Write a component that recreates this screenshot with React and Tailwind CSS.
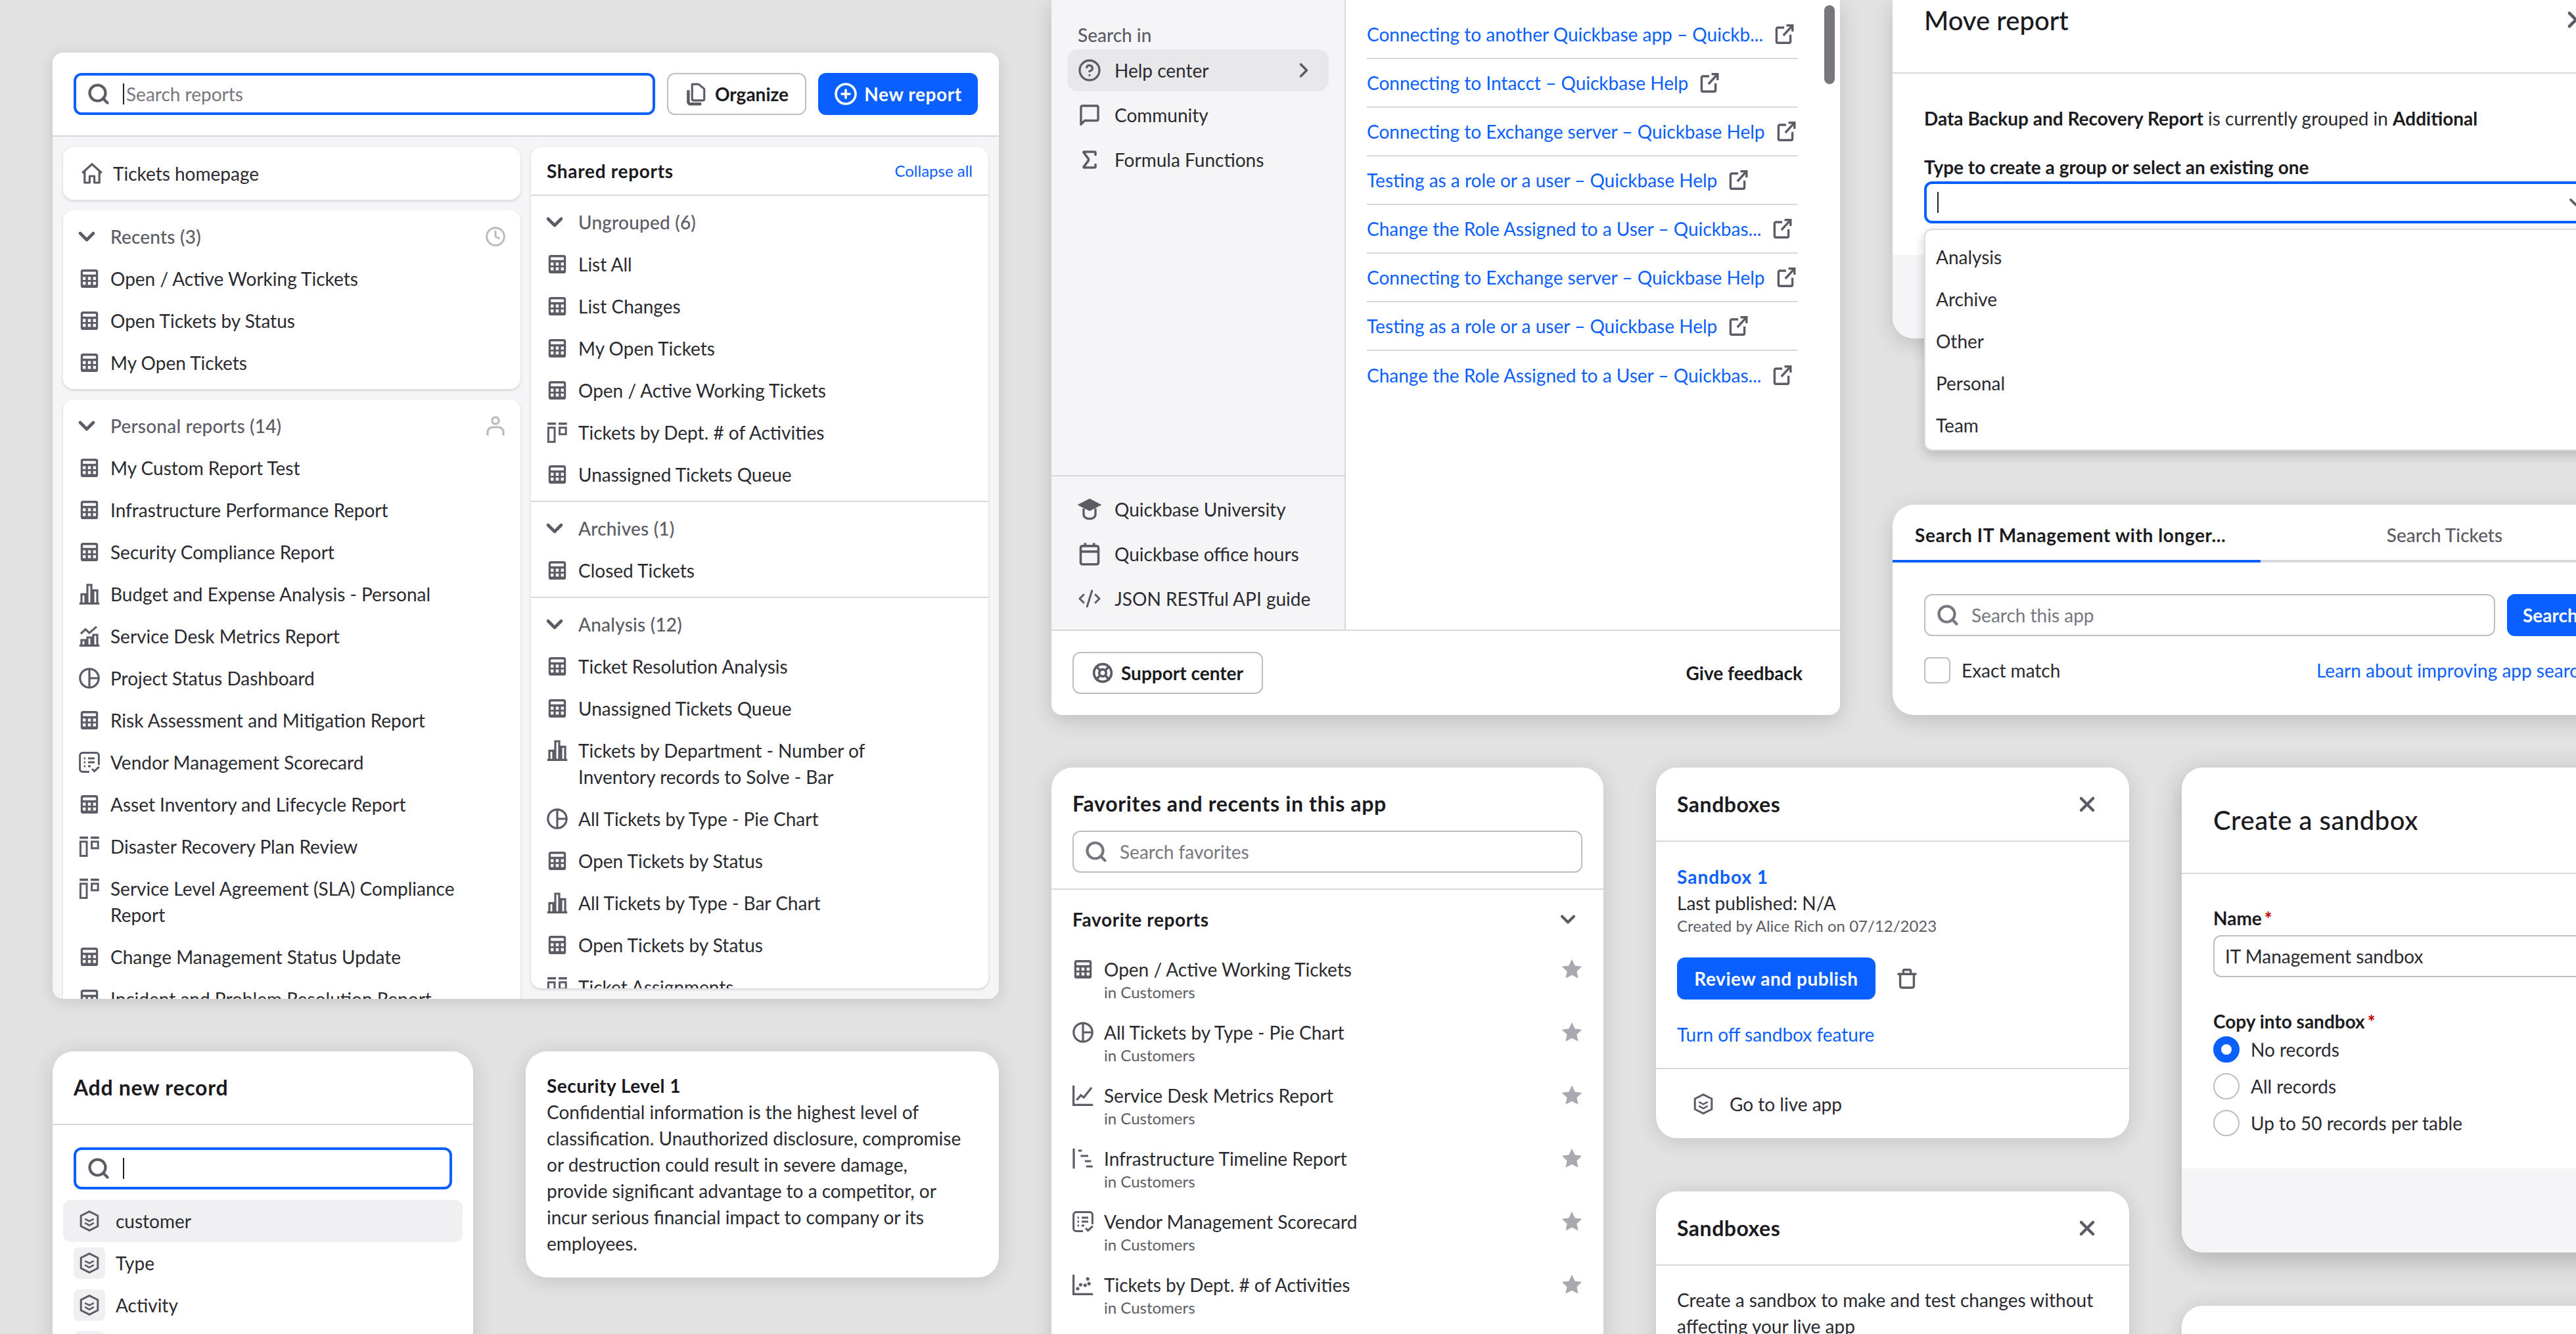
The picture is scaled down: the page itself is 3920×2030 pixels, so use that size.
import React from 'react';
import { Search, ChevronDown, ChevronRight, X, LifeBuoy, CodeXml, Sigma, CircleHelp, CirclePlus, Clock } from 'lucide-react';

const GRAY = '#5c5c66';

// Report type icons, all drawn on a 16 unit box
const TableIcon = ({ className = 'w-8 h-8' }) => (
    <svg viewBox="0 0 16 16" className={`${className} shrink-0`}>
        <rect x="1.4" y="1" width="13.2" height="14" rx="1.8" fill={GRAY} />
        <rect x="3" y="2.7" width="10" height="2.2" rx="0.4" fill="#fff" />
        {[3, 6.9, 10.8].map(x => [6.7, 10.4].map(y => (
            <rect key={`${x}-${y}`} x={x} y={y} width="2.2" height="2.3" fill="#fff" />
        )))}
    </svg>
);

const BarsIcon = () => (
    <svg viewBox="0 0 16 16" className="w-8 h-8 shrink-0" fill="none" stroke={GRAY} strokeWidth="1.6">
        <path d="M.4 15.2h15.2" strokeWidth="1.7" />
        <path d="M2 15V8.2h3V15M6.5 15V1h3v14M11 15V5.2h3V15" />
    </svg>
);

const BarsLineIcon = () => (
    <svg viewBox="0 0 16 16" className="w-8 h-8 shrink-0" fill="none" stroke={GRAY} strokeWidth="1.6">
        <path d="M.4 15.2h15.2" strokeWidth="1.7" />
        <path d="M2 15v-4h3v4M6.5 15V9h3v6M11 15V7h3v8" />
        <path d="M1.5 6.2 5 2.8l3 2.8L13.5.8" />
    </svg>
);

const PieIcon = () => (
    <svg viewBox="0 0 16 16" className="w-8 h-8 shrink-0" fill="none" stroke={GRAY} strokeWidth="1.6">
        <circle cx="8" cy="8" r="7.1" />
        <path d="M8 1v14M8 8h7" />
    </svg>
);

const ScoreIcon = () => (
    <svg viewBox="0 0 16 16" className="w-8 h-8 shrink-0" fill="none" stroke={GRAY} strokeWidth="1.5">
        <path d="M8 15.2H2.8a2 2 0 0 1-2-2V2.8a2 2 0 0 1 2-2h10.4a2 2 0 0 1 2 2V10" />
        <path d="M3.8 5h1.2M7 5h5M3.8 8h1.2M7 8h5M3.8 11h1.2M7 11h2" />
        <path d="m10 13 1.8 1.8 3.6-3.4" />
    </svg>
);

const BoardIcon = () => (
    <svg viewBox="0 0 16 16" className="w-8 h-8 shrink-0" fill="none" stroke={GRAY} strokeWidth="1.5">
        <path d="M.6 1.4h6.4M9 1.4h6.4" strokeWidth="1.8" />
        <rect x="1.2" y="4.4" width="4.8" height="10.8" />
        <rect x="9.8" y="4.4" width="4.8" height="5" />
    </svg>
);

const LineIcon = () => (
    <svg viewBox="0 0 16 16" className="w-8 h-8 shrink-0" fill="none" stroke={GRAY} strokeWidth="1.6">
        <path d="M.8.4v14.8h14.8" />
        <path d="m3.2 11.5 3.2-3.7 2.2 1.7L14.6 2" />
    </svg>
);

const TimelineIcon = () => (
    <svg viewBox="0 0 16 16" className="w-8 h-8 shrink-0" fill="none" stroke={GRAY} strokeWidth="1.6">
        <path d="M1 .4v15.2M4.4 2h2.8M6.2 6h5.8M9.4 10h4.8M10.4 14h5" />
    </svg>
);

const ScatterIcon = () => (
    <svg viewBox="0 0 16 16" className="w-8 h-8 shrink-0" stroke={GRAY} fill={GRAY}>
        <path d="M.8.4v14.8h14.8" fill="none" strokeWidth="1.6" />
        <circle cx="4" cy="11" r=".8" /><circle cx="6.2" cy="8" r=".8" /><circle cx="9.6" cy="8.4" r=".8" />
        <circle cx="11.6" cy="3.6" r=".8" /><circle cx="12.6" cy="7.2" r=".8" />
    </svg>
);

const HexIcon = ({ className = 'w-8 h-8' }) => (
    <svg viewBox="0 0 16 16" className={`${className} shrink-0`} fill="none" stroke={GRAY} strokeWidth="1.5">
        <path d="M8 .8 14.4 4v8L8 15.2 1.6 12V4z" strokeLinejoin="round" />
        <path d="M4.6 6.4 8 8.2l3.4-1.8M4.6 9.4 8 11.4l3.4-2" strokeWidth="1.3" />
    </svg>
);

const HomeIcon = () => (
    <svg viewBox="0 0 16 16" className="w-8 h-8 shrink-0" fill="none" stroke={GRAY} strokeWidth="1.6">
        <path d="M.6 7.6 8 .9l7.4 6.7M2.4 6.2v8.8h3.8v-5h3.6v5h3.8V6.2" strokeLinejoin="round" />
    </svg>
);

const UserIcon = () => (
    <svg viewBox="0 0 16 16" className="w-8 h-8 shrink-0" fill="none" stroke="#b9b9be" strokeWidth="1.6">
        <circle cx="8" cy="4" r="2.6" />
        <path d="M2 15.4v-2.8A4 4 0 0 1 6 9h4a4 4 0 0 1 4 3.6v2.8" />
    </svg>
);

const OrganizeIcon = () => (
    <svg viewBox="0 0 16 16" className="w-9 h-9 shrink-0" fill="none" stroke={GRAY} strokeWidth="1.4">
        <path d="M5 1.4h4.4l3.8 3.2v6.8a1 1 0 0 1-1 1H6a1 1 0 0 1-1-1z" strokeLinejoin="round" />
        <path d="M2.4 5.4v8a1.4 1.4 0 0 0 1.4 1.4h7.4" strokeWidth="2" />
    </svg>
);

const ExternalIcon = () => (
    <svg viewBox="0 0 16 16" className="w-8 h-8 shrink-0" fill="none" stroke={GRAY} strokeWidth="1.7">
        <path d="M8 3H3.2a1 1 0 0 0-1 1v9.6a1 1 0 0 0 1 1h8.6a1 1 0 0 0 1-1V8.4" />
        <path d="M7.4 9 14 1.8M9.8 1.4h4.6V6" />
    </svg>
);

const ChatIcon = () => (
    <svg viewBox="0 0 16 16" className="w-9 h-9 shrink-0" fill="none" stroke={GRAY} strokeWidth="1.5">
        <path d="M2.2 14.4V2.8a1 1 0 0 1 1-1h9.6a1 1 0 0 1 1 1v8a1 1 0 0 1-1 1H4.6z" strokeLinejoin="round" />
    </svg>
);

const CapIcon = () => (
    <svg viewBox="0 0 16 16" className="w-9 h-9 shrink-0" fill="none" stroke={GRAY} strokeWidth="1.5">
        <path d="M8 1.6 14.6 5 8 8.4 1.4 5z" fill={GRAY} />
        <path d="M4 7.4v4c0 1.8 1.8 3 4 3s4-1.2 4-3v-4" />
    </svg>
);

const CalendarIcon = () => (
    <svg viewBox="0 0 16 16" className="w-9 h-9 shrink-0" fill="none" stroke={GRAY} strokeWidth="1.6">
        <rect x="2" y="2.6" width="12" height="12.4" rx="1.2" />
        <path d="M2 6.4h12M5 .6v2.4M11 .6v2.4" />
    </svg>
);

const TrashIcon = () => (
    <svg viewBox="0 0 16 16" className="w-8 h-8 shrink-0" fill="none" stroke={GRAY} strokeWidth="1.7">
        <path d="M.8 4.6h14.4M5.2 4.4V2.2a.8.8 0 0 1 .8-.8h4a.8.8 0 0 1 .8.8v2.2" />
        <path d="M2.8 4.6v9a1.4 1.4 0 0 0 1.4 1.4h7.6a1.4 1.4 0 0 0 1.4-1.4v-9" />
    </svg>
);

const StarIcon = () => (
    <svg viewBox="0 0 24 24" className="w-8 h-8 shrink-0" fill="#a9a9af">
        <path d="m12 .6 3.5 7.3 8 1-5.9 5.5 1.6 8L12 18.5l-7.2 3.9 1.6-8L.5 8.9l8-1z" />
    </svg>
);

const SearchGlyph = ({ color = GRAY }) => <Search className="w-9 h-9 shrink-0" strokeWidth={2.8} color={color} />;

const ICONS = { t: TableIcon, b: BarsIcon, l: BarsLineIcon, p: PieIcon, s: ScoreIcon, k: BoardIcon };

const RECENTS = [['t', 'Open / Active Working Tickets'], ['t', 'Open Tickets by Status'], ['t', 'My Open Tickets']];

const PERSONAL = [
    ['t', 'My Custom Report Test'],
    ['t', 'Infrastructure Performance Report'],
    ['t', 'Security Compliance Report'],
    ['b', 'Budget and Expense Analysis - Personal'],
    ['l', 'Service Desk Metrics Report'],
    ['p', 'Project Status Dashboard'],
    ['t', 'Risk Assessment and Mitigation Report'],
    ['s', 'Vendor Management Scorecard'],
    ['t', 'Asset Inventory and Lifecycle Report'],
    ['k', 'Disaster Recovery Plan Review'],
    ['k', 'Service Level Agreement (SLA) Compliance Report'],
    ['t', 'Change Management Status Update'],
    ['t', 'Incident and Problem Resolution Report'],
];

const UNGROUPED = [
    ['t', 'List All'],
    ['t', 'List Changes'],
    ['t', 'My Open Tickets'],
    ['t', 'Open / Active Working Tickets'],
    ['k', 'Tickets by Dept. # of Activities'],
    ['t', 'Unassigned Tickets Queue'],
];

const ANALYSIS = [
    ['t', 'Ticket Resolution Analysis'],
    ['t', 'Unassigned Tickets Queue'],
    ['b', 'Tickets by Department - Number of Inventory records to Solve - Bar'],
    ['p', 'All Tickets by Type - Pie Chart'],
    ['t', 'Open Tickets by Status'],
    ['b', 'All Tickets by Type - Bar Chart'],
    ['t', 'Open Tickets by Status'],
    ['k', 'Ticket Assignments'],
];

const HELP_LINKS = [
    'Connecting to another Quickbase app – Quickb...',
    'Connecting to Intacct – Quickbase Help',
    'Connecting to Exchange server – Quickbase Help',
    'Testing as a role or a user – Quickbase Help',
    'Change the Role Assigned to a User – Quickbas...',
    'Connecting to Exchange server – Quickbase Help',
    'Testing as a role or a user – Quickbase Help',
    'Change the Role Assigned to a User – Quickbas...',
];

const FAVORITES = [
    [TableIcon, 'Open / Active Working Tickets'],
    [PieIcon, 'All Tickets by Type - Pie Chart'],
    [LineIcon, 'Service Desk Metrics Report'],
    [TimelineIcon, 'Infrastructure Timeline Report'],
    [ScoreIcon, 'Vendor Management Scorecard'],
    [ScatterIcon, 'Tickets by Dept. # of Activities'],
];

const ReportRow = ({ icon, name }) => {
    const Icon = ICONS[icon];
    return (
        <div className="flex gap-4 pl-6 pr-4 py-3">
            <span className="h-10 flex items-center shrink-0"><Icon /></span>
            <span className="max-w-[552px]">{name}</span>
        </div>
    );
};

const SectionHead = ({ title, right }) => (
    <div className="flex items-center gap-4 pl-6 pr-[22px] h-16 text-[#5c5c66] font-medium">
        <span className="w-8 flex justify-center shrink-0">
            <ChevronDown className="w-10 h-10 shrink-0 -ml-2" strokeWidth={2.8} color={GRAY} />
        </span>
        <span className="flex-1 tracking-[0.2px]">{title}</span>
        {right}
    </div>
);

const Caret = ({ className = '' }) => <span className={`w-[2px] h-8 bg-[#1f1f24] shrink-0 ${className}`} />;

const ReportsCard = () => (
    <div className="w-[1440px] h-[1440px] bg-[#f5f5f7] rounded-[16px] overflow-hidden shadow-[0_4px_24px_rgba(0,0,0,0.12)] shrink-0">
        <div className="h-[128px] bg-white border-b-2 border-[#d8d8dc] flex items-center gap-[18px] px-8">
            <div className="flex-1 h-16 rounded-[12px] border-[4px] border-[#0a60ff] flex items-center pl-4 gap-[19px] text-[#77777f]">
                <SearchGlyph />
                <Caret />
                <span className="-ml-[16px]">Search reports</span>
            </div>
            <button className="h-16 w-[212px] rounded-[12px] border-2 border-[#bdbdc2] flex items-center justify-center gap-[10px] font-bold text-[#1a1a1f]">
                <OrganizeIcon />Organize
            </button>
            <button className="h-16 w-[243px] rounded-[12px] bg-[#0a60ff] flex items-center justify-center gap-[10px] font-bold text-white tracking-[0.6px]">
                <CirclePlus className="w-9 h-9" strokeWidth={2.4} color="#fff" />New report
            </button>
        </div>
        <div className="flex gap-4 pt-4 px-4">
            <div className="w-[696px] flex flex-col gap-4 shrink-0">
                <div className="h-20 bg-white rounded-[16px] shadow-[0_2px_4px_rgba(0,0,0,0.14)] flex items-center gap-4 pl-7">
                    <HomeIcon />Tickets homepage
                </div>
                <div className="bg-white rounded-[16px] shadow-[0_2px_4px_rgba(0,0,0,0.14)] py-2">
                    <SectionHead title="Recents (3)" right={<Clock className="w-8 h-8" strokeWidth={2.2} color="#b9b9be" />} />
                    {RECENTS.map(([icon, name]) => <ReportRow key={name} icon={icon} name={name} />)}
                </div>
                <div className="bg-white rounded-[16px] shadow-[0_2px_4px_rgba(0,0,0,0.14)] py-2">
                    <SectionHead title="Personal reports (14)" right={<UserIcon />} />
                    {PERSONAL.map(([icon, name]) => <ReportRow key={name} icon={icon} name={name} />)}
                </div>
            </div>
            <div className="w-[696px] h-[1280px] bg-white rounded-[16px] shadow-[0_2px_4px_rgba(0,0,0,0.14)] overflow-hidden shrink-0">
                <div className="h-[74px] flex items-center justify-between pl-6 pr-6 border-b-2 border-[#d8d8dc]">
                    <span className="font-bold text-[#1a1a1f] tracking-[0.7px]">Shared reports</span>
                    <span className="text-[24px] text-[#0a60ff]">Collapse all</span>
                </div>
                <div className="py-2 border-b-2 border-[#d8d8dc]">
                    <SectionHead title="Ungrouped (6)" />
                    {UNGROUPED.map(([icon, name]) => <ReportRow key={name} icon={icon} name={name} />)}
                </div>
                <div className="py-2 border-b-2 border-[#d8d8dc]">
                    <SectionHead title="Archives (1)" />
                    <ReportRow icon="t" name="Closed Tickets" />
                </div>
                <div className="py-2">
                    <SectionHead title="Analysis (12)" />
                    {ANALYSIS.map(([icon, name], i) => <ReportRow key={i} icon={icon} name={name} />)}
                </div>
            </div>
        </div>
    </div>
);

const AddRecordCard = () => (
    <div className="w-[640px] h-[500px] bg-white rounded-t-[32px] shadow-[0_4px_32px_rgba(0,0,0,0.14)] shrink-0">
        <div className="h-[112px] flex items-center px-8 border-b-2 border-[#d8d8dc] text-[32px] font-bold text-[#1a1a1f] tracking-[0.7px]">Add new record</div>
        <div className="px-8 pt-[34px] pb-4">
            <div className="h-16 rounded-[12px] border-[4px] border-[#0a60ff] flex items-center pl-4 gap-[19px]">
                <SearchGlyph />
                <Caret />
            </div>
        </div>
        <div className="px-4">
            {['customer', 'Type', 'Activity', 'Priority'].map((name, i) => (
                <div key={name} className={`h-16 flex items-center gap-4 px-4 rounded-[12px] ${i === 0 ? 'bg-[#f0f0f2]' : ''}`}>
                    <span className="w-12 h-12 rounded-[8px] bg-[#f0f0f2] flex items-center justify-center shrink-0"><HexIcon /></span>
                    {name}
                </div>
            ))}
        </div>
    </div>
);

const SecurityCard = () => (
    <div className="w-[720px] h-[344px] p-8 bg-white rounded-[32px] shadow-[0_4px_32px_rgba(0,0,0,0.14)] shrink-0">
        <div className="font-bold text-[#1a1a1f] tracking-[0.5px]">Security Level 1</div>
        <div className="max-w-[640px]">Confidential information is the highest level of classification. Unauthorized disclosure, compromise or destruction could result in severe damage, provide significant advantage to a competitor, or incur serious financial impact to company or its employees.</div>
    </div>
);

const SideItem = ({ icon, label, selected }) => (
    <div className={`h-16 flex items-center gap-[20px] pl-4 pr-5 rounded-[16px] ${selected ? 'bg-[#e8e8ea]' : ''}`}>
        {icon}
        <span className="flex-1 whitespace-nowrap">{label}</span>
        {selected && <ChevronRight className="w-9 h-9" strokeWidth={2.4} color={GRAY} />}
    </div>
);

const HelpPanel = () => (
    <div className="w-[1200px] h-[1088px] bg-white rounded-b-[16px] shadow-[0_8px_32px_rgba(0,0,0,0.16)] flex flex-col shrink-0 overflow-hidden">
        <div className="h-[960px] flex border-b-2 border-[#d8d8dc] relative">
            <div className="w-[448px] bg-[#f5f5f7] border-r-2 border-[#d8d8dc] flex flex-col justify-between shrink-0">
                <div className="px-6 pt-[33px]">
                    <div className="pl-4 h-10 mb-[2px] text-[#5c5c66] font-medium">Search in</div>
                    <div className="flex flex-col gap-1">
                        <SideItem selected label="Help center" icon={<CircleHelp className="w-9 h-9" strokeWidth={2.2} color={GRAY} />} />
                        <SideItem label="Community" icon={<ChatIcon />} />
                        <SideItem label="Formula Functions" icon={<Sigma className="w-9 h-9" strokeWidth={2.4} color={GRAY} />} />
                    </div>
                </div>
                <div className="h-[235px] px-6 pt-[18px] border-t-2 border-[#d8d8dc] flex flex-col gap-1">
                    <SideItem label="Quickbase University" icon={<CapIcon />} />
                    <SideItem label="Quickbase office hours" icon={<CalendarIcon />} />
                    <SideItem label="JSON RESTful API guide" icon={<CodeXml className="w-9 h-9" strokeWidth={2} color={GRAY} />} />
                </div>
            </div>
            <div className="pl-8 w-[688px] pt-4">
                {HELP_LINKS.map((text, i) => (
                    <div key={i} className={`h-[74px] flex items-center gap-4 text-[#0a60ff] whitespace-nowrap ${i < 7 ? 'border-b-2 border-[#d8d8dc]' : ''}`}>
                        {text}<ExternalIcon />
                    </div>
                ))}
            </div>
            <div className="absolute left-[1176px] top-2 w-4 h-[120px] rounded-full bg-[#77777c]" />
        </div>
        <div className="flex-1 flex items-center justify-between pl-8 pr-[57px]">
            <button className="h-16 w-[290px] rounded-[12px] border-2 border-[#bdbdc2] flex items-center justify-center gap-3 font-bold text-[#1a1a1f]">
                <LifeBuoy className="w-8 h-8" strokeWidth={2.8} color={GRAY} />Support center
            </button>
            <span className="font-bold text-[#1a1a1f]">Give feedback</span>
        </div>
    </div>
);

const MoveCard = () => (
    <div className="relative w-[1120px] h-[515px] shrink-0">
        <div className="h-full bg-white rounded-b-[32px] shadow-[0_8px_32px_rgba(0,0,0,0.16)] overflow-hidden flex flex-col">
            <div className="h-[112px] flex justify-between pl-12 pr-[60px] pt-[6px] border-b-2 border-[#d8d8dc] shrink-0">
                <span className="text-[40px] leading-[50px] font-medium text-[#1a1a1f]">Move report</span>
                <X className="w-10 h-10 mt-1" strokeWidth={2.8} color={GRAY} />
            </div>
            <div className="flex-1 px-12 pt-[48px]">
                <div><b className="text-[#1a1a1f]">Data Backup and Recovery Report</b> is currently grouped in <b className="text-[#1a1a1f]">Additional</b></div>
                <div className="mt-[34px] font-bold text-[#1a1a1f]">Type to create a group or select an existing one</div>
                <div className="h-16 mt-[2px] rounded-[12px] border-[4px] border-[#0a60ff] flex items-center justify-between pl-4 pr-3">
                    <Caret />
                    <ChevronDown className="w-8 h-8" strokeWidth={2.8} color={GRAY} />
                </div>
            </div>
            <div className="h-[127px] bg-[#f5f5f7] shrink-0" />
        </div>
        <div className="absolute left-[48px] top-[348px] w-[1024px] h-[338px] pt-[9px] bg-white rounded-[12px] border-2 border-[#dcdcdf] shadow-[0_6px_18px_rgba(0,0,0,0.2)]">
            {['Analysis', 'Archive', 'Other', 'Personal', 'Team'].map(name => (
                <div key={name} className="h-16 flex items-center pl-4">{name}</div>
            ))}
        </div>
    </div>
);

const SearchCard = () => (
    <div className="w-[1120px] h-[320px] bg-white rounded-[32px] shadow-[0_8px_32px_rgba(0,0,0,0.16)] overflow-hidden shrink-0">
        <div className="h-[88px] flex border-b-[4px] border-[#d8d8dc]">
            <div className="w-[560px] h-[88px] border-b-[4px] border-[#0a60ff] flex items-center pl-[34px] pt-2 font-bold text-[#1a1a1f] tracking-[0.6px]">Search IT Management with longer...</div>
            <div className="w-[560px] h-[84px] pt-2 flex items-center justify-center text-[#5c5c66] font-medium">Search Tickets</div>
        </div>
        <div className="pl-12 pt-[48px]">
            <div className="flex gap-[18px]">
                <div className="w-[869px] h-16 rounded-[12px] border-2 border-[#bdbdc2] flex items-center pl-4 gap-[18px] text-[#77777f] shrink-0">
                    <SearchGlyph color="#77777f" />Search this app
                </div>
                <div className="w-[200px] h-16 rounded-[12px] bg-[#0a60ff] flex items-center pl-6 font-bold text-white shrink-0">Search</div>
            </div>
            <div className="flex items-center mt-8 h-10">
                <span className="w-10 h-10 rounded-[8px] border-2 border-[#bdbdc2] shrink-0" />
                <span className="ml-[17px] w-[540px]">Exact match</span>
                <span className="text-[#0a60ff] whitespace-nowrap">Learn about improving app search</span>
            </div>
        </div>
    </div>
);

const FavoritesCard = () => (
    <div className="w-[840px] h-[900px] bg-white rounded-t-[32px] shadow-[0_4px_32px_rgba(0,0,0,0.14)] shrink-0">
        <div className="px-8 pt-[32px] h-[186px] border-b-2 border-[#d8d8dc]">
            <div className="text-[32px] leading-[46px] font-bold text-[#1a1a1f] mb-[18px] tracking-[0.65px]">Favorites and recents in this app</div>
            <div className="h-16 rounded-[12px] border-2 border-[#bdbdc2] flex items-center pl-4 gap-[18px] text-[#77777f]">
                <SearchGlyph color="#77777f" />Search favorites
            </div>
        </div>
        <div className="h-[89px] flex items-center justify-between pl-8 pr-[36px] font-bold text-[#1a1a1f] tracking-[0.6px]">
            Favorite reports
            <ChevronDown className="w-9 h-9" strokeWidth={2.8} color={GRAY} />
        </div>
        <div className="px-8">
            {FAVORITES.map(([Icon, name]) => (
                <div key={name} className="h-24 flex items-start gap-4 pt-3">
                    <span className="h-10 flex items-center"><Icon /></span>
                    <div className="flex-1">
                        <div>{name}</div>
                        <div className="text-[24px] leading-[30px] text-[#5c5c66]">in Customers</div>
                    </div>
                    <span className="h-10 flex items-center"><StarIcon /></span>
                </div>
            ))}
        </div>
    </div>
);

const SandboxHead = () => (
    <div className="h-[113px] flex items-center justify-between pl-8 pr-[46px] border-b-2 border-[#d8d8dc] text-[32px] font-bold text-[#1a1a1f] tracking-[0.5px] shrink-0">
        Sandboxes
        <X className="w-9 h-9" strokeWidth={3} color={GRAY} />
    </div>
);

const SandboxCards = () => (
    <div className="w-[720px] flex flex-col gap-[81px] shrink-0">
        <div className="h-[564px] bg-white rounded-[32px] shadow-[0_4px_32px_rgba(0,0,0,0.14)] flex flex-col">
            <SandboxHead />
            <div className="h-[346px] border-b-2 border-[#d8d8dc] px-8 pt-[33px]">
                <div className="font-bold text-[#0a60ff] tracking-[1px]">Sandbox 1</div>
                <div>Last published: N/A</div>
                <div className="text-[24px] leading-[30px] text-[#5c5c66]">Created by Alice Rich on 07/12/2023</div>
                <div className="flex items-center gap-8 mt-[33px]">
                    <button className="h-16 w-[302px] rounded-[12px] bg-[#0a60ff] font-bold text-white tracking-[0.55px]">Review and publish</button>
                    <TrashIcon />
                </div>
                <div className="mt-[33px] text-[#0a60ff]">Turn off sandbox feature</div>
            </div>
            <div className="flex-1 flex items-center gap-6 pl-14"><HexIcon />Go to live app</div>
        </div>
        <div className="h-[400px] bg-white rounded-t-[32px] shadow-[0_4px_32px_rgba(0,0,0,0.14)] flex flex-col">
            <SandboxHead />
            <div className="px-8 pt-[32px] pr-6">Create a sandbox to make and test changes without affecting your live app</div>
        </div>
    </div>
);

const RADIOS = ['No records', 'All records', 'Up to 50 records per table'];

const CreateCards = () => (
    <div className="w-[1120px] flex flex-col gap-[81px] shrink-0">
        <div className="h-[738px] bg-white rounded-[32px] shadow-[0_10px_40px_rgba(0,0,0,0.24)] overflow-hidden flex flex-col">
            <div className="h-[162px] flex items-center pl-12 border-b-2 border-[#d8d8dc] text-[40px] font-medium text-[#1a1a1f] tracking-[0.5px] shrink-0">Create a sandbox</div>
            <div className="flex-1 px-12 pt-[47px]">
                <div className="font-bold text-[#1a1a1f]">Name<span className="text-[#c00000] ml-1">*</span></div>
                <div className="h-16 w-full mt-[6px] rounded-[12px] border-2 border-[#bdbdc2] flex items-center pl-4">IT Management sandbox</div>
                <div className="mt-[47px] font-bold text-[#1a1a1f]">Copy into sandbox<span className="text-[#c00000] ml-1">*</span></div>
                <div className="flex flex-col gap-4 mt-[3px]">
                    {RADIOS.map((label, i) => (
                        <div key={label} className="flex items-center gap-[17px] h-10">
                            <span className={`w-10 h-10 rounded-full shrink-0 ${i === 0 ? 'border-[12px] border-[#0a60ff] bg-white' : 'border-2 border-[#bdbdc2]'}`} />
                            {label}
                        </div>
                    ))}
                </div>
            </div>
            <div className="h-[128px] bg-[#f5f5f7] shrink-0" />
        </div>
        <div className="h-[200px] bg-white rounded-t-[32px] shadow-[0_4px_32px_rgba(0,0,0,0.14)]" />
    </div>
);

const App = () => {
    return (
        <div className="w-[3920px] h-[2030px] overflow-hidden bg-[#e2e2e2] flex gap-20 pl-20 font-['Lato','Noto_Sans',sans-serif] text-[28px] leading-[40px] text-[#2a2a30]">
            <div className="w-[1440px] flex flex-col gap-20 pt-20 shrink-0">
                <ReportsCard />
                <div className="flex gap-20">
                    <AddRecordCard />
                    <SecurityCard />
                </div>
            </div>
            <div className="flex flex-col gap-20 shrink-0">
                <div className="flex gap-20">
                    <HelpPanel />
                    <div className="flex flex-col justify-between h-[1088px]">
                        <MoveCard />
                        <SearchCard />
                    </div>
                </div>
                <div className="flex gap-20">
                    <FavoritesCard />
                    <SandboxCards />
                    <CreateCards />
                </div>
            </div>
        </div>
    );
};

export default App;
